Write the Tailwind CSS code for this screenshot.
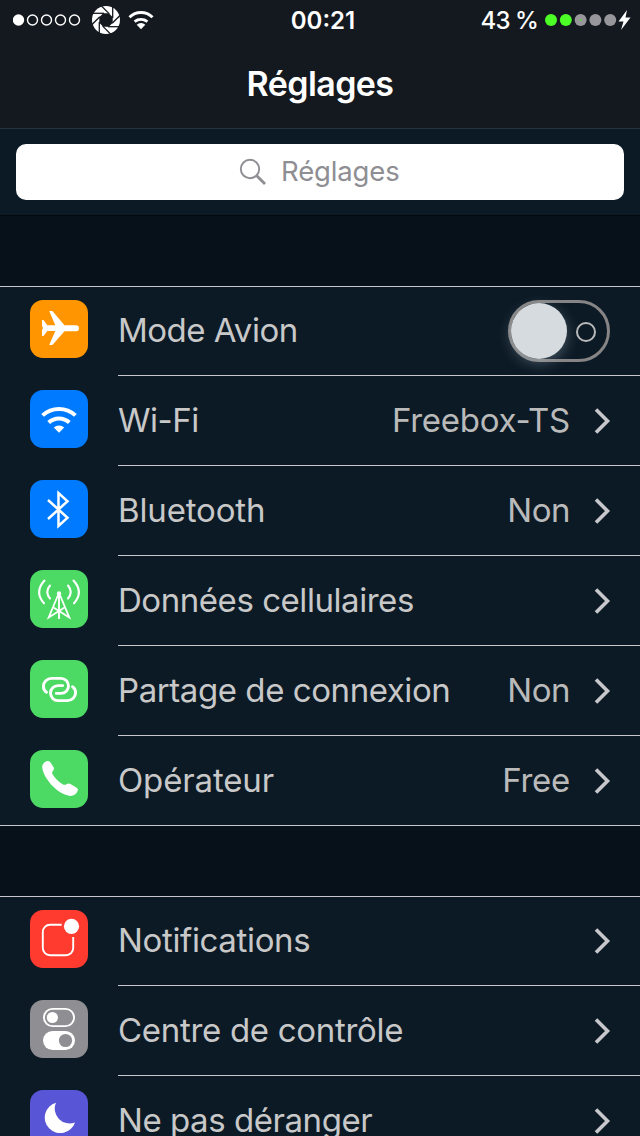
<!DOCTYPE html>
<html lang="fr">
<head>
<meta charset="utf-8">
<title>Réglages</title>
<script src="https://cdn.jsdelivr.net/npm/@tailwindcss/browser@4"></script>
</head>
<body class="w-[640px] h-[1136px] overflow-hidden bg-[#07111a] font-['Inter',sans-serif] text-[#c8c8c8]">
<svg class="hidden">
  <symbol id="chev" viewBox="0 0 18 28"><path d="M3 2.500 L14.500 14 L3 25.500" fill="none" stroke="#c8c7cc" stroke-width="3.600"/></symbol>
</svg>
<header class="h-[129px] bg-[#14191f] border-b border-[#253340] text-white">
  <div class="h-10 flex items-center px-[13px] relative">
    <svg class="w-[68px] h-[14px]" viewBox="0 0 68 14" fill="none" stroke="#fff" stroke-width="1.400"><circle cx="5.500" cy="7" r="5.700" fill="#fff" stroke="none"/><circle cx="19.500" cy="7" r="5"/><circle cx="33.500" cy="7" r="5"/><circle cx="47.500" cy="7" r="5"/><circle cx="61.500" cy="7" r="5"/></svg>
    <svg class="w-7 h-7 ml-[11px]" viewBox="-14 -14 28 28"><circle r="14" fill="#fff"/><path fill="#14191f" d="M6.700 -2.800 V2.800 L2.800 6.700 H-2.800 L-6.700 2.800 V-2.800 L-2.800 -6.700 H2.800Z"/><g stroke="#14191f" stroke-width="1.300"><path id="cut" d="M6.700 -14 V-2"/><use href="#cut" transform="rotate(45)"/><use href="#cut" transform="rotate(90)"/><use href="#cut" transform="rotate(135)"/><use href="#cut" transform="rotate(180)"/><use href="#cut" transform="rotate(225)"/><use href="#cut" transform="rotate(270)"/><use href="#cut" transform="rotate(315)"/></g></svg>
    <svg class="w-[26px] h-5 ml-[8px] -mt-px" viewBox="0 0 26 20" fill="none" stroke="#fff" stroke-width="2.900"><path d="M1.500 7.200 A16.300 16.300 0 0 1 24.500 7.200"/><path d="M5.600 11.700 A10.500 10.500 0 0 1 18.400 11.700" transform="translate(1 0)"/><path d="M8.700 14.800 A6 6 0 0 1 17.300 14.800 L13 19.200Z" fill="#fff" stroke="none"/></svg>
    <div class="absolute left-0 w-[646px] text-center text-[24px] leading-[41px] font-semibold top-0">00:21</div>
    <div class="ml-auto text-[24px] leading-[41px] font-medium tracking-[-0.9px] whitespace-nowrap mr-[7px] mt-px">43 %</div>
    <svg class="w-[86px] h-5 -mr-[4px]" viewBox="0 0 86 20"><circle cx="6" cy="10" r="6" fill="#4cff26"/><circle cx="20.800" cy="10" r="6" fill="#4cff26"/><g fill="#97979b"><circle cx="35.600" cy="10" r="6"/><circle cx="50.400" cy="10" r="6"/><circle cx="65.200" cy="10" r="6"/></g><circle cx="35.600" cy="10" r="1" fill="#57dc3c"/><path d="M82 0 L73.500 11.500 H78.500 L76 20 L85.500 7.500 H80.500 Z" fill="#fff"/></svg>
  </div>
  <h1 class="text-center text-[34px] leading-[88px] font-semibold tracking-[-0.6px]">Réglages</h1>
</header>
<div class="h-[87px] bg-[#0c1a26] border-b border-[#03090e] px-4 pt-[15px]">
  <div class="h-14 rounded-[10px] bg-white flex items-center pl-[223px] text-[#8e8e93]">
    <svg class="w-7 h-7" viewBox="0 0 28 28" fill="none" stroke="#8e8e93"><circle cx="11" cy="11" r="9.200" stroke-width="1.900"/><path d="M17.500 17.500 L26 26" stroke-width="2.800"/></svg>
    <span class="ml-[14px] text-[27.500px] tracking-[-0.15px]">Réglages</span>
  </div>
</div>
<div class="h-[70px]"></div>
<main>
<section class="bg-[#0c1a26] border-t border-[#c8c7cc]">
  <div class="h-[89px] pl-[30px] flex">
    <svg class="w-[58px] h-[58px] mt-[13px] mr-[30px]" viewBox="0 0 58 58"><rect width="58" height="58" rx="13" fill="#ff9500"/><path fill="#fff" d="M12 20 H13.500 L17.300 25.200 H25.300 L19.200 11 H22.400 L34.500 25.200 H46 a3 3 0 0 1 0 6 H34.500 L22.400 45 H19.200 L25.300 31 H17.300 L13.500 36 H12 V30.500 L12.800 28 L12 25.500Z"/></svg>
    <div class="flex-1 flex items-center border-b border-[#c8c7cc] pr-[30px] text-[33px]"><span class="flex-1 tracking-[-0.5px]">Mode Avion</span>
      <div class="w-[102px] h-[62px] rounded-full border-[3px] border-[#868484] flex items-center"><div class="w-14 h-14 rounded-full bg-[#d6dbdf] shadow-[0_4px_14px_rgba(180,200,210,0.35)]"></div><div class="w-5 h-5 rounded-full border-2 border-[#b9b9b9] ml-[9px] mt-px"></div></div>
    </div>
  </div>
  <div class="h-[90px] pl-[30px] flex">
    <svg class="w-[58px] h-[58px] mt-[14px] mr-[30px]" viewBox="0 0 58 58"><rect width="58" height="58" rx="13" fill="#007aff"/><g fill="none" stroke="#fff" stroke-width="4"><path d="M12.600 25.400 A24 24 0 0 1 45.400 25.400"/><path d="M18.700 32.500 A15 15 0 0 1 39.300 32.500"/></g><path d="M23.800 37.600 A7.600 7.600 0 0 1 34.200 37.600 L29 42.800Z" fill="#fff"/></svg>
    <div class="flex-1 flex items-center border-b border-[#c8c7cc] pr-[29px] text-[33px]"><span class="flex-1 tracking-[-0.5px]">Wi-Fi</span><span class="text-[#bababa] tracking-[-0.25px]">Freebox-TS</span><svg class="w-[18px] h-7 ml-[23px]"><use href="#chev"/></svg></div>
  </div>
  <div class="h-[90px] pl-[30px] flex">
    <svg class="w-[58px] h-[58px] mt-[14px] mr-[30px]" viewBox="0 0 58 58"><rect width="58" height="58" rx="13" fill="#007aff"/><path d="M18 20 L37.500 37.700 L28.500 46 V13 L37.500 21.300 L18 39" fill="none" stroke="#fff" stroke-width="2.500"/></svg>
    <div class="flex-1 flex items-center border-b border-[#c8c7cc] pr-[29px] text-[33px]"><span class="flex-1 tracking-[-0.15px]">Bluetooth</span><span class="text-[#bababa] tracking-[-0.5px]">Non</span><svg class="w-[18px] h-7 ml-[23px]"><use href="#chev"/></svg></div>
  </div>
  <div class="h-[90px] pl-[30px] flex">
    <svg class="w-[58px] h-[58px] mt-[14px] mr-[30px]" viewBox="0 0 58 58"><rect width="58" height="58" rx="13" fill="#4cd964"/><g fill="none" stroke="#fff" stroke-width="1.900"><path d="M29 23 V49"/><path stroke-width="1.800" d="M28.500 24 L18.700 47.500 L34.500 37.500 M29.500 24 L39.300 47.500 L23.500 37.500"/><path stroke-linecap="round" stroke-width="2.100" d="M20 15.500 Q14.500 22 20 28.500 M14.500 10.500 Q4 22 14 33.300 M38 15.500 Q43.500 22 38 28.500 M43.500 10.500 Q54 22 44 33.300"/></g><circle cx="29" cy="23.300" r="2.100" fill="#fff"/></svg>
    <div class="flex-1 flex items-center border-b border-[#c8c7cc] pr-[29px] text-[33px]"><span class="flex-1 tracking-[-0.45px]">Données cellulaires</span><svg class="w-[18px] h-7 ml-[23px]"><use href="#chev"/></svg></div>
  </div>
  <div class="h-[90px] pl-[30px] flex">
    <svg class="w-[58px] h-[58px] mt-[14px] mr-[30px]" viewBox="0 0 58 58"><rect width="58" height="58" rx="13" fill="#4cd964"/><g fill="none" stroke-linecap="round"><path id="link" stroke="#fff" stroke-width="2.900" d="M16.500 32.200 C14.500 31 13.400 28.800 13.400 26.200 C13.400 22 17 18.400 21.500 18.400 H31 a7.500 7.500 0 0 1 0 15 H26.300"/><use href="#link" transform="rotate(180 29.500 29.500)"/></g></svg>
    <div class="flex-1 flex items-center border-b border-[#c8c7cc] pr-[29px] text-[33px]"><span class="flex-1 tracking-[-0.43px]">Partage de connexion</span><span class="text-[#bababa] tracking-[-0.5px]">Non</span><svg class="w-[18px] h-7 ml-[23px]"><use href="#chev"/></svg></div>
  </div>
  <div class="h-[90px] flex border-b border-[#c8c7cc] pl-[30px]">
    <svg class="w-[58px] h-[58px] mt-[14px] mr-[30px]" viewBox="0 0 58 58"><rect width="58" height="58" rx="13" fill="#4cd964"/><path fill="#fff" d="M12.200 17 C12 14 15 11.500 17.500 11.100 C19 10.900 20 11.700 20.700 12.800 L23.600 17.200 C24.300 18.500 24 19.500 23.200 20.500 C22 22 21.800 23 22.600 24.300 C25 28.500 29 32.300 33 34.400 C34.300 35.100 35.300 34.900 36.500 34.200 C38 33.300 39.300 33.300 40.500 34 L46.700 37.800 C48 38.600 48.200 39.800 47.600 41 C46.500 43.800 44 46 40.500 46 C34 45.500 27 40.500 22 35.500 C17.500 30.500 12.500 23 12.200 17Z"/></svg>
    <div class="flex-1 flex items-center pr-[29px] text-[33px]"><span class="flex-1 tracking-[-0.15px]">Opérateur</span><span class="text-[#bababa] tracking-[-0.25px]">Free</span><svg class="w-[18px] h-7 ml-[23px]"><use href="#chev"/></svg></div>
  </div>
</section>
<div class="h-[70px]"></div>
<section class="bg-[#0c1a26] border-t border-[#c8c7cc]">
  <div class="h-[89px] pl-[30px] flex">
    <svg class="w-[58px] h-[58px] mt-[13px] mr-[30px]" viewBox="0 0 58 58"><rect width="58" height="58" rx="13" fill="#ff3b30"/><path d="M31.700 14.700 H20 a7.200 7.200 0 0 0 -7.200 7.200 V38 a7.200 7.200 0 0 0 7.200 7.200 H36 a7.200 7.200 0 0 0 7.200 -7.200 V27" fill="none" stroke="#fff" stroke-width="1.900"/><circle cx="41.500" cy="16.300" r="7.600" fill="#fff"/></svg>
    <div class="flex-1 flex items-center border-b border-[#c8c7cc] pr-[29px] text-[33px]"><span class="flex-1 tracking-[-0.35px]">Notifications</span><svg class="w-[18px] h-7 ml-[23px]"><use href="#chev"/></svg></div>
  </div>
  <div class="h-[90px] pl-[30px] flex">
    <svg class="w-[58px] h-[58px] mt-[14px] mr-[30px]" viewBox="0 0 58 58"><rect width="58" height="58" rx="13" fill="#8e8e93"/><rect x="13.900" y="8.900" width="30.200" height="17.200" rx="8.600" fill="none" stroke="#fff" stroke-width="1.900"/><circle cx="22.400" cy="17.500" r="5.600" fill="#fff"/><rect x="13" y="31" width="32" height="19" rx="9.500" fill="#fff"/><circle cx="35.500" cy="40.500" r="6.600" fill="#8e8e93"/></svg>
    <div class="flex-1 flex items-center border-b border-[#c8c7cc] pr-[29px] text-[33px]"><span class="flex-1 tracking-[-0.3px]">Centre de contrôle</span><svg class="w-[18px] h-7 ml-[23px]"><use href="#chev"/></svg></div>
  </div>
  <div class="h-[90px] pl-[30px] flex">
    <svg class="w-[58px] h-[58px] mt-[14px] mr-[30px]" viewBox="0 0 58 58"><rect width="58" height="58" rx="13" fill="#5856d6"/><path d="M26 12.700 A15.500 15.500 0 1 0 45 32.400 A14.800 14.800 0 0 1 26 12.700Z" fill="#fff"/></svg>
    <div class="flex-1 flex items-center pr-[29px] text-[33px]"><span class="flex-1 tracking-[-0.45px]">Ne pas déranger</span><svg class="w-[18px] h-7 ml-[23px]"><use href="#chev"/></svg></div>
  </div>
</section>
</main>
</body>
</html>
